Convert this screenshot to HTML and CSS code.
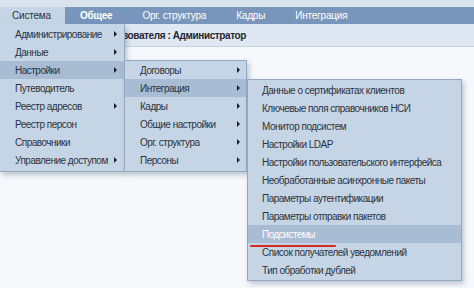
FILE: index.html
```html
<!DOCTYPE html>
<html lang="ru">
<head>
<meta charset="utf-8">
<link rel="stylesheet" href="styles.css">
</head>
<body>
<div class="page">
  <div class="topstrip"></div>
  <nav class="menubar">
    <span class="mb-item active">Система</span>
    <span class="mb-item bold">Общее</span>
    <span class="mb-item">Орг. структура</span>
    <span class="mb-item">Кадры</span>
    <span class="mb-item">Интеграция</span>
  </nav>
  <div class="header"><div class="header-inner"><span class="role">Роль пользователя : Администратор</span></div></div>
  <div class="content"></div>

  <ul class="menu m1">
    <li class="sub">Администрирование</li>
    <li class="sub">Данные</li>
    <li class="sub hl">Настройки</li>
    <li>Путеводитель</li>
    <li class="sub">Реестр адресов</li>
    <li>Реестр персон</li>
    <li>Справочники</li>
    <li class="sub">Управление доступом</li>
  </ul>
  <ul class="menu m2">
    <li class="sub">Договоры</li>
    <li class="sub hl">Интеграция</li>
    <li class="sub">Кадры</li>
    <li class="sub">Общие настройки</li>
    <li class="sub">Орг. структура</li>
    <li class="sub">Персоны</li>
  </ul>
  <ul class="menu m3">
    <li>Данные о сертификатах клиентов</li>
    <li>Ключевые поля справочников НСИ</li>
    <li>Монитор подсистем</li>
    <li>Настройки LDAP</li>
    <li>Настройки пользовательского интерфейса</li>
    <li>Необработанные асинхронные пакеты</li>
    <li>Параметры аутентификации</li>
    <li>Параметры отправки пакетов</li>
    <li class="hl white">Подсистемы</li>
    <li>Список получателей уведомлений</li>
    <li>Тип обработки дублей</li>
  </ul>
  <div class="redline"></div>
</div>
</body>
</html>
```
FILE: styles.css
```css
* { box-sizing: border-box; }
html, body { margin: 0; padding: 0; }
body {
  width: 474px;
  height: 288px;
  overflow: hidden;
  font-family: "Liberation Sans", Arial, sans-serif;
  font-size: 10px;
  letter-spacing: -0.5px;
  color: #2b3340;
  background: #f6f8fb;
}
.page {
  position: relative;
  width: 474px;
  height: 288px;
  display: flex;
  flex-direction: column;
}
.topstrip {
  height: 7px;
  background: #d9e3ee;
}
.menubar {
  height: 17px;
  background: #7896bb;
  display: flex;
  align-items: stretch;
  letter-spacing: -0.2px;
}
.mb-item {
  display: flex;
  align-items: center;
  padding: 0 15px 0 15px;
  color: #ffffff;
}
.mb-item.active {
  background: #c6d5e5;
  color: #2b3340;
  padding: 0 14px 0 12px;
}
.mb-item.bold { font-weight: bold; }
.header {
  height: 23px;
  background: #dfe8f2;
  border-bottom: 1px solid #c4d2e1;
  display: flex;
  align-items: center;
  overflow: hidden;
}
.header-inner {
  width: 246px;
  flex: none;
  display: flex;
  justify-content: flex-end;
  white-space: nowrap;
}
.role {
  font-weight: bold;
  font-size: 10px;
  letter-spacing: -0.4px;
  color: #1f2630;
}
.content {
  flex: 1;
  background: #f6f8fb;
}
.menu {
  position: absolute;
  margin: 0;
  list-style: none;
  background: #c6d5e5;
  border: 1px solid #94a9c1;
  box-shadow: 2px 3px 5px rgba(60, 80, 110, 0.3);
}
.menu li {
  height: 18px;
  display: flex;
  align-items: center;
  position: relative;
  white-space: nowrap;
}
.menu li.hl { background: #a8bcd3; }
.menu li.white { color: #ffffff; }
.menu li.sub::after {
  content: "";
  position: absolute;
  top: 6px;
  width: 0;
  height: 0;
  border-top: 3px solid transparent;
  border-bottom: 3px solid transparent;
  border-left: 3px solid #1a1f28;
}
.m1 {
  left: 0;
  top: 24px;
  width: 125px;
  height: 148px;
  padding: 1px 0 0 15px;
  border-left: none;
  border-top: none;
}
.m1 li.sub::after { left: 99px; }
.m2 {
  left: 124px;
  top: 60px;
  width: 123px;
  height: 112px;
  padding: 0 0 0 15px;
}
.m2 li.sub::after { left: 97px; }
.m3 {
  left: 247px;
  top: 79px;
  width: 215px;
  height: 202px;
  padding: 1px 0 0 14px;
}
.m1 li.hl { margin-left: -15px; padding-left: 15px; }
.m2 li.hl { margin-left: -15px; padding-left: 15px; }
.m3 li.hl { margin-left: -14px; padding-left: 14px; }
.m1 li.hl.sub::after { left: 114px; }
.m2 li.hl.sub::after { left: 112px; }
.redline {
  position: absolute;
  left: 250px;
  top: 245px;
  width: 86px;
  height: 2px;
  background: #d42a22;
  border-radius: 1px;
}
```
